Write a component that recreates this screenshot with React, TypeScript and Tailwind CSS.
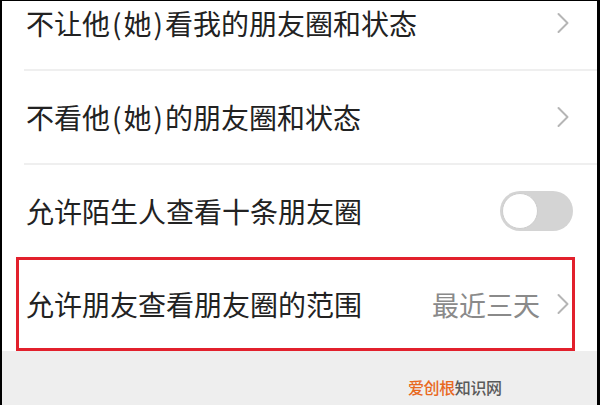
const FONT = { fontFamily: '"Noto Sans CJK SC", "Noto Sans", sans-serif' };

function Chevron() {
  return (
    <svg width="14" height="22" viewBox="0 0 14 22" aria-hidden="true">
      <path d="M2.5 2 L11.5 11 L2.5 20" fill="none" stroke="#b5b5b5" strokeWidth="2" strokeLinecap="round" strokeLinejoin="round" />
    </svg>
  );
}

function Divider() {
  return (
    <div className="bg-white pl-[22px]">
      <div className="h-[2px] bg-[#efefef]" />
    </div>
  );
}

// half-width parens sit a bit looser in the reference font
function Label({ text }: { text: string }) {
  return (
    <span className="text-[28px] leading-none text-[#222]">
      {text.split(/([()])/).map((part, i) =>
        part === "(" || part === ")" ? (
          <span key={i} className="px-[2px]">
            {part}
          </span>
        ) : (
          part
        )
      )}
    </span>
  );
}

function Row({ label, children, first }: { label: string; children?: React.ReactNode; first?: boolean }) {
  return (
    <div className={`flex h-[92px] items-center justify-between bg-white pl-[24px] pr-[27px] ${first ? "-mt-[24px]" : ""}`}>
      <Label text={label} />
      {children}
    </div>
  );
}

function Toggle() {
  return (
    <div className="-mr-[3px] flex h-[40px] w-[73px] items-center rounded-full bg-[#d4d4d4] px-[2px]">
      <div className="h-[36px] w-[36px] rounded-full border border-[#cdcdcd] bg-white" />
    </div>
  );
}

export default function App() {
  return (
    <div
      className="relative flex h-[405px] w-[600px] flex-col overflow-hidden border-l-2 border-r-[3px] border-t border-black bg-[#eeeeee]"
      style={FONT}
    >
      <Row label="不让他(她)看我的朋友圈和状态" first>
        <Chevron />
      </Row>
      <Divider />
      <Row label="不看他(她)的朋友圈和状态">
        <Chevron />
      </Row>
      <Divider />
      <Row label="允许陌生人查看十条朋友圈">
        <Toggle />
      </Row>
      <div className="bg-white pl-[14px] pr-[22px]">
        <div className="flex h-[94px] items-center justify-between border-[3px] border-[#e2202c] pl-[7px] pr-[2px]">
          <Label text="允许朋友查看朋友圈的范围" />
          <div className="flex items-center gap-[16px]">
            <span className="text-[27px] leading-none text-[#8a8a8a]">最近三天</span>
            <Chevron />
          </div>
        </div>
      </div>

      <div className="absolute left-[406px] top-[378px] text-[16px] font-medium leading-none tracking-[-0.4px]">
        <span className="text-[#e8681e]">爱创根</span>
        <span className="text-[#5a5a5a]">知识网</span>
      </div>
    </div>
  );
}
